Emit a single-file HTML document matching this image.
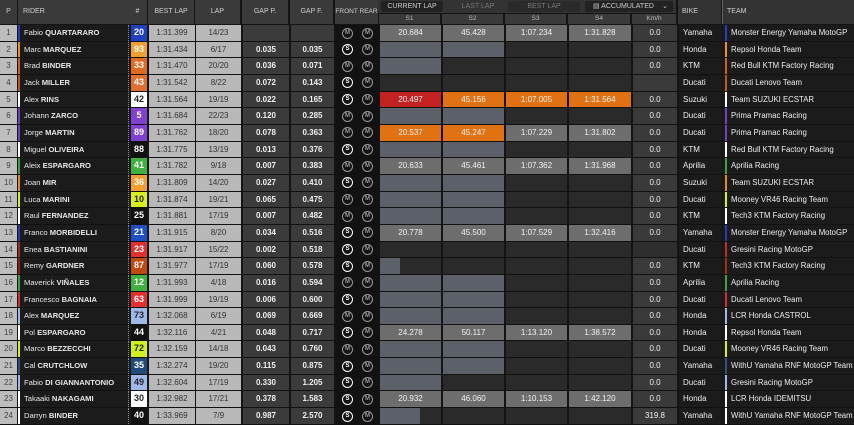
<!DOCTYPE html>
<html><head><meta charset="utf-8">
<style>
*{box-sizing:border-box;margin:0;padding:0}
body{width:854px;height:425px;background:#141414;font-family:"Liberation Sans",sans-serif;overflow:hidden;position:relative;color:#ddd}
.hd{position:absolute;top:0;left:0;width:854px;height:25px;background:#141414}
.h{position:absolute;top:0;height:24px;background:#3a3a3a;color:#cfcfcf;font-size:7px;line-height:24px;padding-left:4px}
.hc{text-align:center;padding:0}
.tabs{position:absolute;left:378px;top:0;width:298px;height:13px;background:#333}
.tab{position:absolute;top:1px;height:11px;font-size:7px;line-height:11px;color:#777;text-align:center}
.sh{position:absolute;top:14px;height:10px;background:#3a3a3a;color:#bbb;font-size:6.5px;line-height:10px;text-align:center}
.rows{position:absolute;top:25px;left:0;width:854px}
.r{height:16.667px;display:flex;border-bottom:1px solid #111;font-size:8px;line-height:15.6px;position:relative}
.r>span{display:block;height:100%;flex:none;white-space:nowrap;overflow:hidden}
.p{width:17px;margin-right:1px;background:#bdbdbd;color:#444;text-align:center}
.n{width:110px;background:#1b1b1b;color:#e8e8e8;padding-left:6px;position:relative;font-size:7.6px}
.n b{font-weight:bold}
.n i{position:absolute;left:0;top:0;bottom:0;width:2px}
.nb{width:20px;margin-right:1px;background:#1b1b1b;border-left:1px dotted #888;padding:0 1px 0 2px}
.nb em{display:block;height:100%;font-style:normal;font-weight:bold;text-align:center;font-size:9px;color:#fff}
.bl{width:46px;margin-right:1px;background:#b8b8b8;color:#333;text-align:center}
.lp{width:45px;margin-right:2px;background:#b8b8b8;color:#333;text-align:center}
.gp{width:46px;margin-right:2px;background:#3b3b3b;color:#f0f0f0;text-align:center;font-weight:bold}
.gf{width:43px;margin-right:2px;background:#3b3b3b;color:#f0f0f0;text-align:center;font-weight:bold}
.ty{width:43px;margin-right:1px;background:#121212;position:relative}
.ty u{position:absolute;top:2.5px;width:11px;height:11px;border:1px solid #999;border-radius:50%;font-size:6px;line-height:9px;text-align:center;text-decoration:none;color:#999;font-weight:bold}
.ty u.s{border-color:#fff;color:#fff}
.s1,.s2,.s3{width:61px;margin-right:2px}
.s4{width:62px;margin-right:2px}
.s1,.s2,.s3,.s4{text-align:center;color:#f2f2f2;background:#2a2a2a;position:relative}
.g{background:#6d6d6d!important}
.b{background:#5c6068!important}
.rd{background:#c42222!important}
.o{background:#e07214!important}
.pt{position:absolute;left:0;top:0;bottom:0;background:#5c6068}
.km{width:44px;margin-right:2px;background:#3a3a3a;color:#eee;text-align:center}
.bk{width:43px;margin-right:1px;background:#1b1b1b;color:#eee;padding-left:4px;font-size:8px}
.tm{width:132px;background:#1b1b1b;color:#eee;padding-left:8px;position:relative;font-size:7.8px}
.tm i{position:absolute;left:2px;top:0;bottom:0;width:2px}
</style></head><body>
<div class="hd">
<div class="h hc" style="left:0;width:17px">P</div>
<div class="h" style="left:18px;width:110px;padding-left:5px">RIDER</div>
<div class="h hc" style="left:128px;width:19px">#</div>
<div class="h hc" style="left:148px;width:46px">BEST LAP</div>
<div class="h hc" style="left:195px;width:45px">LAP</div>
<div class="h hc" style="left:242px;width:46px">GAP P.</div>
<div class="h hc" style="left:290px;width:43px">GAP F.</div>
<div class="h hc" style="left:335px;width:43px;font-size:6.5px">FRONT REAR</div>
<div class="tabs">
<div class="tab" style="left:3px;width:62px;background:#222;color:#ccc;border-radius:2px">CURRENT LAP</div>
<div class="tab" style="left:70px;width:60px">LAST LAP</div>
<div class="tab" style="left:130px;width:72px;background:#2a2a2a">BEST LAP</div>
<div class="tab" style="left:207px;width:88px;background:#222;color:#ccc;text-align:left;padding-left:8px;border-radius:2px">&#9636; ACCUMULATED<span style="position:absolute;right:5px">&#8964;</span></div>
</div>
<div class="sh" style="left:379px;width:61px">S1</div>
<div class="sh" style="left:442px;width:61px">S2</div>
<div class="sh" style="left:505px;width:61px">S3</div>
<div class="sh" style="left:568px;width:62px">S4</div>
<div class="sh" style="left:632px;width:44px">Km/h</div>
<div class="h" style="left:678px;width:43px;background:#333">BIKE</div>
<div class="h" style="left:722px;width:132px;background:#333;border-left:1px solid #666">TEAM</div>
</div>
<div class="rows">
<div class="r"><span class="p">1</span><span class="n"><i style="background:#2040c0"></i>Fabio <b>QUARTARARO</b></span><span class="nb"><em style="background:#2040c0">20</em></span><span class="bl">1:31.399</span><span class="lp">14/23</span><span class="gp"></span><span class="gf"></span><span class="ty"><u style="left:6px">M</u><u style="left:26px">M</u></span><span class="s1 g">20.684</span><span class="s2 g">45.428</span><span class="s3 g">1:07.234</span><span class="s4 g">1:31.828</span><span class="km">0.0</span><span class="bk">Yamaha</span><span class="tm"><i style="background:#2040c0"></i>Monster Energy Yamaha MotoGP</span></div>
<div class="r"><span class="p">2</span><span class="n"><i style="background:#f08a30"></i>Marc <b>MARQUEZ</b></span><span class="nb"><em style="background:#f0a030">93</em></span><span class="bl">1:31.434</span><span class="lp">6/17</span><span class="gp">0.035</span><span class="gf">0.035</span><span class="ty"><u class="s" style="left:6px">S</u><u style="left:26px">M</u></span><span class="s1 b"></span><span class="s2 b"></span><span class="s3"></span><span class="s4"></span><span class="km">0.0</span><span class="bk">Honda</span><span class="tm"><i style="background:#f08a30"></i>Repsol Honda Team</span></div>
<div class="r"><span class="p">3</span><span class="n"><i style="background:#d06020"></i>Brad <b>BINDER</b></span><span class="nb"><em style="background:#e06a20">33</em></span><span class="bl">1:31.470</span><span class="lp">20/20</span><span class="gp">0.036</span><span class="gf">0.071</span><span class="ty"><u style="left:6px">M</u><u style="left:26px">M</u></span><span class="s1 b"></span><span class="s2"></span><span class="s3"></span><span class="s4"></span><span class="km">0.0</span><span class="bk">KTM</span><span class="tm"><i style="background:#d06020"></i>Red Bull KTM Factory Racing</span></div>
<div class="r"><span class="p">4</span><span class="n"><i style="background:#c05820"></i>Jack <b>MILLER</b></span><span class="nb"><em style="background:#e07030">43</em></span><span class="bl">1:31.542</span><span class="lp">8/22</span><span class="gp">0.072</span><span class="gf">0.143</span><span class="ty"><u class="s" style="left:6px">S</u><u style="left:26px">M</u></span><span class="s1"></span><span class="s2"></span><span class="s3"></span><span class="s4"></span><span class="km"></span><span class="bk">Ducati</span><span class="tm"><i style="background:#c05820"></i>Ducati Lenovo Team</span></div>
<div class="r"><span class="p">5</span><span class="n"><i style="background:#fff"></i>Alex <b>RINS</b></span><span class="nb"><em style="background:#fff;color:#222">42</em></span><span class="bl">1:31.564</span><span class="lp">19/19</span><span class="gp">0.022</span><span class="gf">0.165</span><span class="ty"><u class="s" style="left:6px">S</u><u style="left:26px">M</u></span><span class="s1 rd">20.497</span><span class="s2 o">45.156</span><span class="s3 o">1:07.005</span><span class="s4 o">1:31.564</span><span class="km">0.0</span><span class="bk">Suzuki</span><span class="tm"><i style="background:#fff"></i>Team SUZUKI ECSTAR</span></div>
<div class="r"><span class="p">6</span><span class="n"><i style="background:#7040c0"></i>Johann <b>ZARCO</b></span><span class="nb"><em style="background:#8040d0">5</em></span><span class="bl">1:31.684</span><span class="lp">22/23</span><span class="gp">0.120</span><span class="gf">0.285</span><span class="ty"><u style="left:6px">M</u><u style="left:26px">M</u></span><span class="s1 b"></span><span class="s2 b"></span><span class="s3"></span><span class="s4"></span><span class="km">0.0</span><span class="bk">Ducati</span><span class="tm"><i style="background:#7040c0"></i>Prima Pramac Racing</span></div>
<div class="r"><span class="p">7</span><span class="n"><i style="background:#7040c0"></i>Jorge <b>MARTIN</b></span><span class="nb"><em style="background:#8040d0">89</em></span><span class="bl">1:31.762</span><span class="lp">18/20</span><span class="gp">0.078</span><span class="gf">0.363</span><span class="ty"><u style="left:6px">M</u><u style="left:26px">M</u></span><span class="s1 o">20.537</span><span class="s2 o">45.247</span><span class="s3 g">1:07.229</span><span class="s4 g">1:31.802</span><span class="km">0.0</span><span class="bk">Ducati</span><span class="tm"><i style="background:#7040c0"></i>Prima Pramac Racing</span></div>
<div class="r"><span class="p">8</span><span class="n"><i style="background:#fff"></i>Miguel <b>OLIVEIRA</b></span><span class="nb"><em style="background:#111">88</em></span><span class="bl">1:31.775</span><span class="lp">13/19</span><span class="gp">0.013</span><span class="gf">0.376</span><span class="ty"><u class="s" style="left:6px">S</u><u style="left:26px">M</u></span><span class="s1 b"></span><span class="s2 b"></span><span class="s3"></span><span class="s4"></span><span class="km">0.0</span><span class="bk">KTM</span><span class="tm"><i style="background:#fff"></i>Red Bull KTM Factory Racing</span></div>
<div class="r"><span class="p">9</span><span class="n"><i style="background:#40a040"></i>Aleix <b>ESPARGARO</b></span><span class="nb"><em style="background:#40b040">41</em></span><span class="bl">1:31.782</span><span class="lp">9/18</span><span class="gp">0.007</span><span class="gf">0.383</span><span class="ty"><u style="left:6px">M</u><u style="left:26px">M</u></span><span class="s1 g">20.633</span><span class="s2 g">45.461</span><span class="s3 g">1:07.362</span><span class="s4 g">1:31.968</span><span class="km">0.0</span><span class="bk">Aprilia</span><span class="tm"><i style="background:#40a040"></i>Aprilia Racing</span></div>
<div class="r"><span class="p">10</span><span class="n"><i style="background:#e08a30"></i>Joan <b>MIR</b></span><span class="nb"><em style="background:#f0a030">36</em></span><span class="bl">1:31.809</span><span class="lp">14/20</span><span class="gp">0.027</span><span class="gf">0.410</span><span class="ty"><u class="s" style="left:6px">S</u><u style="left:26px">M</u></span><span class="s1 b"></span><span class="s2 b"></span><span class="s3"></span><span class="s4"></span><span class="km">0.0</span><span class="bk">Suzuki</span><span class="tm"><i style="background:#e08a30"></i>Team SUZUKI ECSTAR</span></div>
<div class="r"><span class="p">11</span><span class="n"><i style="background:#d0f020"></i>Luca <b>MARINI</b></span><span class="nb"><em style="background:#d8f020;color:#222">10</em></span><span class="bl">1:31.874</span><span class="lp">19/21</span><span class="gp">0.065</span><span class="gf">0.475</span><span class="ty"><u style="left:6px">M</u><u style="left:26px">M</u></span><span class="s1 b"></span><span class="s2 b"></span><span class="s3"></span><span class="s4"></span><span class="km">0.0</span><span class="bk">Ducati</span><span class="tm"><i style="background:#d0f020"></i>Mooney VR46 Racing Team</span></div>
<div class="r"><span class="p">12</span><span class="n"><i style="background:#fff"></i>Raul <b>FERNANDEZ</b></span><span class="nb"><em style="background:#111">25</em></span><span class="bl">1:31.881</span><span class="lp">17/19</span><span class="gp">0.007</span><span class="gf">0.482</span><span class="ty"><u style="left:6px">M</u><u style="left:26px">M</u></span><span class="s1 b"></span><span class="s2 b"></span><span class="s3"></span><span class="s4"></span><span class="km">0.0</span><span class="bk">KTM</span><span class="tm"><i style="background:#fff"></i>Tech3 KTM Factory Racing</span></div>
<div class="r"><span class="p">13</span><span class="n"><i style="background:#2040b0"></i>Franco <b>MORBIDELLI</b></span><span class="nb"><em style="background:#2050c0">21</em></span><span class="bl">1:31.915</span><span class="lp">8/20</span><span class="gp">0.034</span><span class="gf">0.516</span><span class="ty"><u class="s" style="left:6px">S</u><u style="left:26px">M</u></span><span class="s1 g">20.778</span><span class="s2 g">45.500</span><span class="s3 g">1:07.529</span><span class="s4 g">1:32.416</span><span class="km">0.0</span><span class="bk">Yamaha</span><span class="tm"><i style="background:#2040b0"></i>Monster Energy Yamaha MotoGP</span></div>
<div class="r"><span class="p">14</span><span class="n"><i style="background:#a03020"></i>Enea <b>BASTIANINI</b></span><span class="nb"><em style="background:#e03030">23</em></span><span class="bl">1:31.917</span><span class="lp">15/22</span><span class="gp">0.002</span><span class="gf">0.518</span><span class="ty"><u class="s" style="left:6px">S</u><u style="left:26px">M</u></span><span class="s1"></span><span class="s2"></span><span class="s3"></span><span class="s4"></span><span class="km" style="background:#2e2e2e"></span><span class="bk">Ducati</span><span class="tm"><i style="background:#c03020"></i>Gresini Racing MotoGP</span></div>
<div class="r"><span class="p">15</span><span class="n"><i style="background:#902010"></i>Remy <b>GARDNER</b></span><span class="nb"><em style="background:#c04a10">87</em></span><span class="bl">1:31.977</span><span class="lp">17/19</span><span class="gp">0.060</span><span class="gf">0.578</span><span class="ty"><u class="s" style="left:6px">S</u><u style="left:26px">M</u></span><span class="s1"><span class="pt" style="width:20px"></span></span><span class="s2"></span><span class="s3"></span><span class="s4"></span><span class="km">0.0</span><span class="bk">KTM</span><span class="tm"><i style="background:#a03010"></i>Tech3 KTM Factory Racing</span></div>
<div class="r"><span class="p">16</span><span class="n"><i style="background:#40a040"></i>Maverick <b>VIÑALES</b></span><span class="nb"><em style="background:#40b040">12</em></span><span class="bl">1:31.993</span><span class="lp">4/18</span><span class="gp">0.016</span><span class="gf">0.594</span><span class="ty"><u style="left:6px">M</u><u style="left:26px">M</u></span><span class="s1 b"></span><span class="s2 b"></span><span class="s3"></span><span class="s4"></span><span class="km">0.0</span><span class="bk">Aprilia</span><span class="tm"><i style="background:#40a040"></i>Aprilia Racing</span></div>
<div class="r"><span class="p">17</span><span class="n"><i style="background:#d03030"></i>Francesco <b>BAGNAIA</b></span><span class="nb"><em style="background:#e03030">63</em></span><span class="bl">1:31.999</span><span class="lp">19/19</span><span class="gp">0.006</span><span class="gf">0.600</span><span class="ty"><u class="s" style="left:6px">S</u><u style="left:26px">M</u></span><span class="s1 b"></span><span class="s2 b"></span><span class="s3"></span><span class="s4"></span><span class="km">0.0</span><span class="bk">Ducati</span><span class="tm"><i style="background:#d03030"></i>Ducati Lenovo Team</span></div>
<div class="r"><span class="p">18</span><span class="n"><i style="background:#a0b8e8"></i>Alex <b>MARQUEZ</b></span><span class="nb"><em style="background:#a0b8e8;color:#223">73</em></span><span class="bl">1:32.068</span><span class="lp">6/19</span><span class="gp">0.069</span><span class="gf">0.669</span><span class="ty"><u style="left:6px">M</u><u style="left:26px">M</u></span><span class="s1 b"></span><span class="s2 b"></span><span class="s3"></span><span class="s4"></span><span class="km">0.0</span><span class="bk">Honda</span><span class="tm"><i style="background:#a0b8e8"></i>LCR Honda CASTROL</span></div>
<div class="r"><span class="p">19</span><span class="n"><i style="background:#fff"></i>Pol <b>ESPARGARO</b></span><span class="nb"><em style="background:#111">44</em></span><span class="bl">1:32.116</span><span class="lp">4/21</span><span class="gp">0.048</span><span class="gf">0.717</span><span class="ty"><u class="s" style="left:6px">S</u><u style="left:26px">M</u></span><span class="s1 g">24.278</span><span class="s2 g">50.117</span><span class="s3 g">1:13.120</span><span class="s4 g">1:38.572</span><span class="km">0.0</span><span class="bk">Honda</span><span class="tm"><i style="background:#fff"></i>Repsol Honda Team</span></div>
<div class="r"><span class="p">20</span><span class="n"><i style="background:#d0f020"></i>Marco <b>BEZZECCHI</b></span><span class="nb"><em style="background:#d0f020;color:#222">72</em></span><span class="bl">1:32.159</span><span class="lp">14/18</span><span class="gp">0.043</span><span class="gf">0.760</span><span class="ty"><u style="left:6px">M</u><u style="left:26px">M</u></span><span class="s1 b"></span><span class="s2 b"></span><span class="s3"></span><span class="s4"></span><span class="km">0.0</span><span class="bk">Ducati</span><span class="tm"><i style="background:#d0f020"></i>Mooney VR46 Racing Team</span></div>
<div class="r"><span class="p">21</span><span class="n"><i style="background:#305080"></i>Cal <b>CRUTCHLOW</b></span><span class="nb"><em style="background:#204a78">35</em></span><span class="bl">1:32.274</span><span class="lp">19/20</span><span class="gp">0.115</span><span class="gf">0.875</span><span class="ty"><u class="s" style="left:6px">S</u><u style="left:26px">M</u></span><span class="s1 b"></span><span class="s2 b"></span><span class="s3"></span><span class="s4"></span><span class="km">0.0</span><span class="bk">Yamaha</span><span class="tm"><i style="background:#305080"></i>WithU Yamaha RNF MotoGP Team</span></div>
<div class="r"><span class="p">22</span><span class="n"><i style="background:#a0b8e8"></i>Fabio <b>DI GIANNANTONIO</b></span><span class="nb"><em style="background:#a0b8e8;color:#223">49</em></span><span class="bl">1:32.604</span><span class="lp">17/19</span><span class="gp">0.330</span><span class="gf">1.205</span><span class="ty"><u class="s" style="left:6px">S</u><u style="left:26px">M</u></span><span class="s1 b"></span><span class="s2"></span><span class="s3"></span><span class="s4"></span><span class="km">0.0</span><span class="bk">Ducati</span><span class="tm"><i style="background:#a0b8e8"></i>Gresini Racing MotoGP</span></div>
<div class="r"><span class="p">23</span><span class="n"><i style="background:#fff"></i>Takaaki <b>NAKAGAMI</b></span><span class="nb"><em style="background:#fff;color:#222">30</em></span><span class="bl">1:32.982</span><span class="lp">17/21</span><span class="gp">0.378</span><span class="gf">1.583</span><span class="ty"><u class="s" style="left:6px">S</u><u style="left:26px">M</u></span><span class="s1 g">20.932</span><span class="s2 g">46.060</span><span class="s3 g">1:10.153</span><span class="s4 g">1:42.120</span><span class="km">0.0</span><span class="bk">Honda</span><span class="tm"><i style="background:#fff"></i>LCR Honda IDEMITSU</span></div>
<div class="r"><span class="p">24</span><span class="n"><i style="background:#fff"></i>Darryn <b>BINDER</b></span><span class="nb"><em style="background:#111">40</em></span><span class="bl">1:33.969</span><span class="lp">7/9</span><span class="gp">0.987</span><span class="gf">2.570</span><span class="ty"><u class="s" style="left:6px">S</u><u style="left:26px">M</u></span><span class="s1"><span class="pt" style="width:40px"></span></span><span class="s2"></span><span class="s3"></span><span class="s4"></span><span class="km">319.8</span><span class="bk">Yamaha</span><span class="tm"><i style="background:#fff"></i>WithU Yamaha RNF MotoGP Team</span></div>
</div>
</body></html>
